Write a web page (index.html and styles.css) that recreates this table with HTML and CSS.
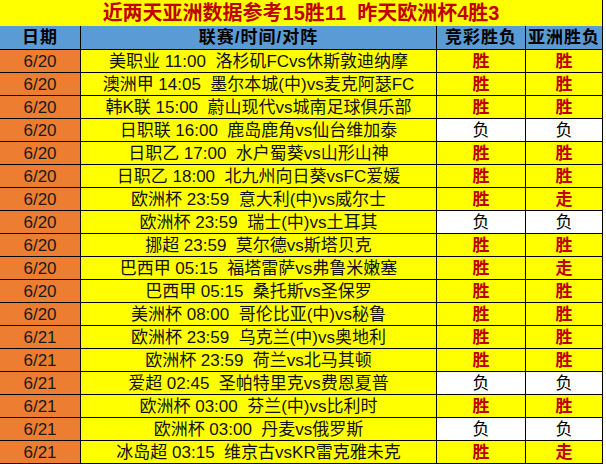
FILE: index.html
```html
<!DOCTYPE html>
<html lang="zh-CN">
<head>
<meta charset="utf-8">
<title>近两天亚洲数据参考</title>
<link rel="stylesheet" href="styles.css">
</head>
<body>
<div class="sheet">
  <div class="title">近两天亚洲数据参考15胜11  昨天欧洲杯4胜3</div>
  <div class="grid">
    <div class="hd">日期</div>
    <div class="hd">联赛/时间/对阵</div>
    <div class="hd">竞彩胜负</div>
    <div class="hd">亚洲胜负</div>

    <div class="date">6/20</div><div class="match">美职业 11:00  洛杉矶FCvs休斯敦迪纳摩</div><div class="res win">胜</div><div class="res win">胜</div>
    <div class="date">6/20</div><div class="match">澳洲甲 14:05  墨尔本城(中)vs麦克阿瑟FC</div><div class="res win">胜</div><div class="res win">胜</div>
    <div class="date">6/20</div><div class="match">韩K联 15:00  蔚山现代vs城南足球俱乐部</div><div class="res win">胜</div><div class="res win">胜</div>
    <div class="date">6/20</div><div class="match">日职联 16:00  鹿岛鹿角vs仙台维加泰</div><div class="res lose">负</div><div class="res lose">负</div>
    <div class="date">6/20</div><div class="match">日职乙 17:00  水户蜀葵vs山形山神</div><div class="res win">胜</div><div class="res win">胜</div>
    <div class="date">6/20</div><div class="match">日职乙 18:00  北九州向日葵vsFC爱媛</div><div class="res win">胜</div><div class="res win">胜</div>
    <div class="date">6/20</div><div class="match">欧洲杯 23:59  意大利(中)vs威尔士</div><div class="res win">胜</div><div class="res win">走</div>
    <div class="date">6/20</div><div class="match">欧洲杯 23:59  瑞士(中)vs土耳其</div><div class="res lose">负</div><div class="res lose">负</div>
    <div class="date">6/20</div><div class="match">挪超 23:59  莫尔德vs斯塔贝克</div><div class="res win">胜</div><div class="res win">胜</div>
    <div class="date">6/20</div><div class="match">巴西甲 05:15  福塔雷萨vs弗鲁米嫩塞</div><div class="res win">胜</div><div class="res win">走</div>
    <div class="date">6/20</div><div class="match">巴西甲 05:15  桑托斯vs圣保罗</div><div class="res win">胜</div><div class="res win">胜</div>
    <div class="date">6/20</div><div class="match">美洲杯 08:00  哥伦比亚(中)vs秘鲁</div><div class="res win">胜</div><div class="res win">胜</div>
    <div class="date">6/21</div><div class="match">欧洲杯 23:59  乌克兰(中)vs奥地利</div><div class="res win">胜</div><div class="res win">胜</div>
    <div class="date">6/21</div><div class="match">欧洲杯 23:59  荷兰vs北马其顿</div><div class="res win">胜</div><div class="res win">胜</div>
    <div class="date">6/21</div><div class="match">爱超 02:45  圣帕特里克vs费恩夏普</div><div class="res lose">负</div><div class="res lose">负</div>
    <div class="date">6/21</div><div class="match">欧洲杯 03:00  芬兰(中)vs比利时</div><div class="res win">胜</div><div class="res win">胜</div>
    <div class="date">6/21</div><div class="match">欧洲杯 03:00  丹麦vs俄罗斯</div><div class="res lose">负</div><div class="res lose">负</div>
    <div class="date">6/21</div><div class="match">冰岛超 03:15  维京古vsKR雷克雅未克</div><div class="res win">胜</div><div class="res win">走</div>
  </div>
</div>
</body>
</html>
```

FILE: styles.css
```css
html, body {
  margin: 0;
  padding: 0;
  background: #ffffff;
}

body {
  font-family: "Liberation Sans", "Noto Sans CJK SC", sans-serif;
  font-size: 17px;
  color: #111111;
}

.sheet {
  width: 603px;
}

.title {
  height: 26px;
  box-sizing: border-box;
  background: #ffff00;
  border-right: 1px solid #000000;
  color: #c00000;
  font-weight: bold;
  font-size: 20px;
  white-space: pre;
  display: flex;
  align-items: center;
  justify-content: center;
  line-height: 1;
}

.grid {
  display: grid;
  grid-template-columns: 80px 355px 88px 76px;
  grid-template-rows: 23px;
  grid-auto-rows: 22px;
  column-gap: 1px;
  row-gap: 1px;
  background: #000000;
  border-right: 1px solid #000000;
  border-bottom: 1px solid #000000;
  width: 602px;
}

.grid > div {
  display: flex;
  align-items: center;
  justify-content: center;
  white-space: pre;
  line-height: 1;
  overflow: hidden;
}

.hd {
  background: #5b9bd5;
  color: #000000;
  font-weight: bold;
  font-size: 17px;
  letter-spacing: 1px;
}

.date {
  background: #ed7d31;
  color: #1a1a1a;
}

.match {
  background: #ffff00;
}

.res {
  font-size: 17px;
}

.win {
  background: #ffff00;
  color: #c00000;
  font-weight: bold;
}

.lose {
  background: #ffffff;
  color: #000000;
}
```
